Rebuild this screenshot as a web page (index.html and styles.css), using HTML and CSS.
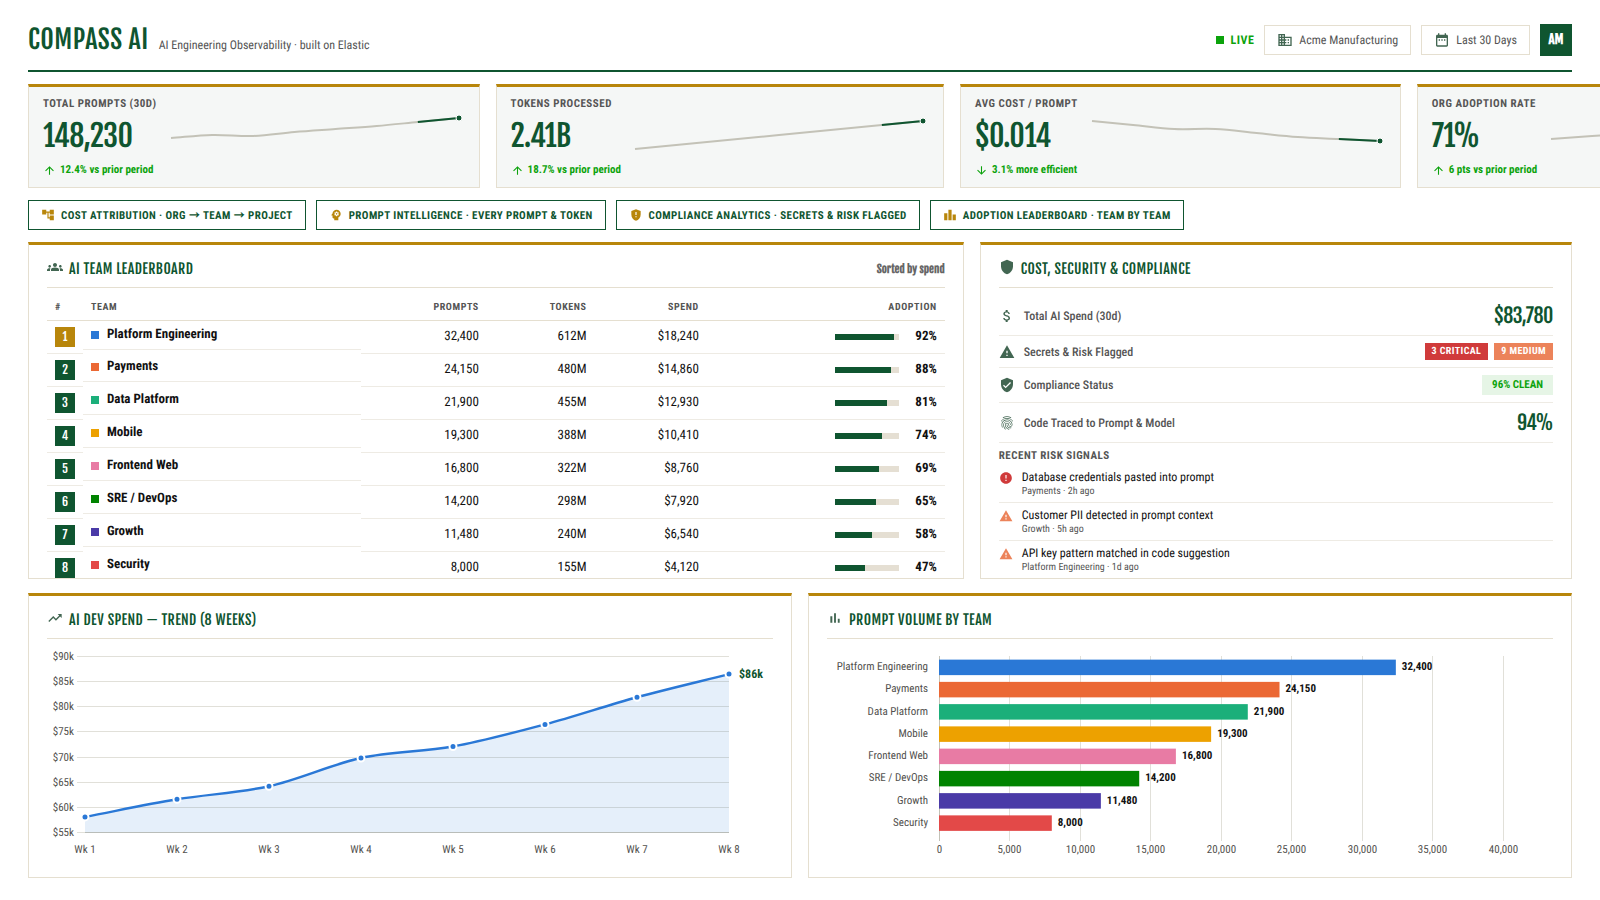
FILE: index.html
```html
<!DOCTYPE html>
<html lang="en">

<head>
    <meta charset="UTF-8">
    <meta name="viewport" content="width=device-width, initial-scale=1.0">
    <title>Compass AI</title>
    <link rel="stylesheet" href="styles.css">
</head>

<body>
    <!-- icon set -->
    <svg class="sprite" aria-hidden="true">
        <symbol id="i-building" viewBox="0 0 24 24"><path d="M12 7V3H2v18h20V7H12zM6 19H4v-2h2v2zm0-4H4v-2h2v2zm0-4H4V9h2v2zm0-4H4V5h2v2zm4 12H8v-2h2v2zm0-4H8v-2h2v2zm0-4H8V9h2v2zm0-4H8V5h2v2zm10 12h-8v-2h2v-2h-2v-2h2v-2h-2V9h8v10zm-2-8h-2v2h2v-2zm0 4h-2v2h2v-2z"/></symbol>
        <symbol id="i-calendar" viewBox="0 0 24 24"><path d="M9 11H7v2h2v-2zm4 0h-2v2h2v-2zm4 0h-2v2h2v-2zm2-7h-1V2h-2v2H8V2H6v2H5c-1.11 0-1.99.9-1.99 2L3 20c0 1.1.89 2 2 2h14c1.1 0 2-.9 2-2V6c0-1.1-.9-2-2-2zm0 16H5V9h14v11z"/></symbol>
        <symbol id="i-tree" viewBox="0 0 24 24"><path d="M22 11V3h-7v3H9V3H2v8h7V8h2v10h4v3h7v-8h-7v3h-2V8h2v3z"/></symbol>
        <symbol id="i-psychology" viewBox="0 0 24 24"><path d="M13 8.57c-.79 0-1.43.64-1.43 1.43s.64 1.43 1.43 1.43 1.43-.64 1.43-1.43-.64-1.43-1.43-1.43z"/><path d="M13 3C9.25 3 6.2 5.94 6.02 9.64L4.1 12.2c-.25.33-.01.8.4.8H6v3c0 1.1.9 2 2 2h1v3h7v-4.68c2.36-1.12 4-3.53 4-6.32 0-3.87-3.13-7-7-7zm3 7c0 .13-.01.26-.02.39l.83.66c.08.06.1.16.05.25l-.8 1.39c-.05.09-.16.12-.24.09l-.99-.4c-.21.16-.43.29-.67.39L14 13.83c-.01.1-.1.17-.2.17h-1.6c-.1 0-.18-.07-.2-.17l-.15-1.06c-.25-.1-.47-.23-.68-.39l-.99.4c-.09.03-.2 0-.25-.09l-.8-1.39c-.05-.08-.03-.19.05-.25l.84-.66c-.01-.13-.02-.26-.02-.39s.02-.27.04-.39l-.85-.66c-.08-.06-.1-.16-.05-.26l.8-1.38c.05-.09.15-.12.24-.09l1 .4c.2-.15.43-.29.67-.39l.15-1.06C12.02 6.07 12.1 6 12.2 6h1.6c.1 0 .18.07.2.17l.15 1.06c.24.1.46.23.67.39l1-.4c.09-.03.2 0 .24.09l.8 1.38c.05.09.03.2-.05.26l-.85.66c.03.12.04.25.04.39z"/></symbol>
        <symbol id="i-shield-alert" viewBox="0 0 24 24"><path d="M12 2 4 5v6.09c0 5.05 3.41 9.76 8 10.91 4.59-1.15 8-5.86 8-10.91V5l-8-3zm1 14h-2v-2h2v2zm0-4h-2V7h2v5z"/></symbol>
        <symbol id="i-leaderboard" viewBox="0 0 24 24"><path d="M7.5 21H2V9h5.5v12zm7.25-18h-5.5v18h5.5V3zM22 11h-5.5v10H22V11z"/></symbol>
        <symbol id="i-groups" viewBox="0 0 24 24"><path d="M12 12.75c1.63 0 3.07.39 4.24.9 1.08.48 1.76 1.56 1.76 2.73V18H6v-1.61c0-1.18.68-2.26 1.76-2.73 1.17-.52 2.61-.91 4.24-.91zM4 13c1.1 0 2-.9 2-2s-.9-2-2-2-2 .9-2 2 .9 2 2 2zm1.13 1.1c-.37-.06-.74-.1-1.13-.1-.99 0-1.93.21-2.78.58C.48 14.9 0 15.62 0 16.43V18h4.5v-1.61c0-.83.23-1.61.63-2.29zM20 13c1.1 0 2-.9 2-2s-.9-2-2-2-2 .9-2 2 .9 2 2 2zm4 3.43c0-.81-.48-1.53-1.22-1.85-.85-.37-1.79-.58-2.78-.58-.39 0-.76.04-1.13.1.4.68.63 1.46.63 2.29V18H24v-1.57zM12 6c1.66 0 3 1.34 3 3s-1.34 3-3 3-3-1.34-3-3 1.34-3 3-3z"/></symbol>
        <symbol id="i-shield" viewBox="0 0 24 24"><path d="M12 1 3 5v6c0 5.55 3.84 10.74 9 12 5.16-1.26 9-6.45 9-12V5l-9-4z"/></symbol>
        <symbol id="i-money" viewBox="0 0 24 24"><path d="M11.8 10.9c-2.27-.59-3-1.2-3-2.15 0-1.09 1.01-1.85 2.7-1.85 1.78 0 2.44.85 2.5 2.1h2.21c-.07-1.72-1.12-3.3-3.21-3.81V3h-3v2.16c-1.94.42-3.5 1.68-3.5 3.61 0 2.31 1.91 3.46 4.7 4.13 2.5.6 3 1.48 3 2.41 0 .69-.49 1.79-2.7 1.79-2.06 0-2.87-.92-2.98-2.1h-2.2c.12 2.19 1.76 3.42 3.68 3.83V21h3v-2.15c1.95-.37 3.5-1.5 3.5-3.55 0-2.84-2.43-3.81-4.7-4.4z"/></symbol>
        <symbol id="i-warning" viewBox="0 0 24 24"><path d="M1 21h22L12 2 1 21zm12-3h-2v-2h2v2zm0-4h-2v-4h2v4z"/></symbol>
        <symbol id="i-verified" viewBox="0 0 24 24"><path d="M12 1 3 5v6c0 5.55 3.84 10.74 9 12 5.16-1.26 9-6.45 9-12V5l-9-4zm-2 16-4-4 1.41-1.41L10 14.17l6.59-6.59L18 9l-8 8z"/></symbol>
        <symbol id="i-fingerprint" viewBox="0 0 24 24"><path d="M17.81 4.47c-.08 0-.16-.02-.23-.06C15.66 3.42 14 3 12.01 3c-1.98 0-3.86.47-5.57 1.41-.24.13-.54.04-.68-.2-.13-.24-.04-.55.2-.68C7.82 2.52 9.86 2 12.01 2c2.13 0 3.99.47 6.03 1.52.25.13.34.43.21.67-.09.18-.26.28-.44.28zM3.5 9.72c-.1 0-.2-.03-.29-.09-.23-.16-.28-.47-.12-.7.99-1.4 2.25-2.5 3.75-3.27C9.98 4.04 14 4.03 17.15 5.65c1.5.77 2.76 1.86 3.75 3.25.16.22.11.54-.12.7-.23.16-.54.11-.7-.12-.9-1.26-2.04-2.25-3.39-2.94-2.87-1.47-6.54-1.47-9.4.01-1.36.7-2.5 1.7-3.4 2.96-.08.14-.23.21-.39.21zm6.25 12.07c-.13 0-.26-.05-.35-.15-.87-.87-1.34-1.43-2.01-2.64-.69-1.23-1.05-2.73-1.05-4.34 0-2.97 2.54-5.39 5.66-5.39s5.66 2.42 5.66 5.39c0 .28-.22.5-.5.5s-.5-.22-.5-.5c0-2.42-2.09-4.39-4.66-4.39-2.57 0-4.66 1.97-4.66 4.39 0 1.44.32 2.77.93 3.85.64 1.15 1.08 1.64 1.85 2.42.19.2.19.51 0 .71-.11.1-.24.15-.37.15zm7.17-1.85c-1.19 0-2.24-.3-3.1-.89-1.49-1.01-2.38-2.65-2.38-4.39 0-.28.22-.5.5-.5s.5.22.5.5c0 1.41.72 2.74 1.94 3.56.71.48 1.54.71 2.54.71.24 0 .64-.03 1.04-.1.27-.05.53.13.58.41.05.27-.13.53-.41.58-.57.11-1.07.12-1.21.12zM14.91 22c-.04 0-.09-.01-.13-.02-1.59-.44-2.63-1.03-3.72-2.1-1.4-1.39-2.17-3.24-2.17-5.22 0-1.62 1.38-2.94 3.08-2.94 1.7 0 3.08 1.32 3.08 2.94 0 1.07.93 1.94 2.08 1.94s2.08-.87 2.08-1.94c0-3.77-3.25-6.83-7.25-6.83-2.84 0-5.44 1.58-6.61 4.03-.39.81-.59 1.76-.59 2.8 0 .78.07 2.01.67 3.61.1.26-.03.55-.29.64-.26.1-.55-.04-.64-.29-.49-1.31-.73-2.61-.73-3.96 0-1.2.23-2.29.68-3.24 1.33-2.79 4.28-4.6 7.51-4.6 4.55 0 8.25 3.51 8.25 7.83 0 1.62-1.38 2.94-3.08 2.94s-3.08-1.32-3.08-2.94c0-1.07-.93-1.94-2.08-1.94s-2.08.87-2.08 1.94c0 1.71.66 3.31 1.87 4.51.95.94 1.86 1.46 3.27 1.85.27.07.42.35.35.61-.05.23-.26.38-.47.38z"/></symbol>
        <symbol id="i-error" viewBox="0 0 24 24"><path d="M12 2C6.48 2 2 6.48 2 12s4.48 10 10 10 10-4.48 10-10S17.52 2 12 2zm1 15h-2v-2h2v2zm0-4h-2V7h2v6z"/></symbol>
        <symbol id="i-trend" viewBox="0 0 24 24"><path d="m16 6 2.29 2.29-4.88 4.88-4-4L2 16.59 3.41 18l6-6 4 4 6.3-6.29L22 12V6z"/></symbol>
        <symbol id="i-bars" viewBox="0 0 24 24"><path d="M5 9.2h3V19H5zM10.6 5h2.8v14h-2.8zm5.6 8H19v6h-2.8z"/></symbol>
        <symbol id="i-up" viewBox="0 0 24 24"><path d="m4 12 1.41 1.41L11 7.83V20h2V7.83l5.58 5.59L20 12l-8-8-8 8z"/></symbol>
        <symbol id="i-down" viewBox="0 0 24 24"><path d="m20 12-1.41-1.41L13 16.17V4h-2v12.17l-5.58-5.59L4 12l8 8 8-8z"/></symbol>
    </svg>

    <header class="topbar">
        <div class="brand">
            <h1>COMPASS AI</h1>
            <span class="tagline">AI Engineering Observability · built on Elastic</span>
        </div>
        <div class="controls">
            <span class="live">LIVE</span>
            <button type="button" class="picker"><svg class="icon"><use href="#i-building"/></svg>Acme Manufacturing</button>
            <button type="button" class="picker"><svg class="icon"><use href="#i-calendar"/></svg>Last 30 Days</button>
            <div class="avatar">AM</div>
        </div>
    </header>

    <section class="kpis">
        <div class="kpi">
            <div>
                <div class="kpi-label">Total Prompts (30d)</div>
                <div class="kpi-value">148,230</div>
                <div class="kpi-delta"><svg class="icon"><use href="#i-up"/></svg>12.4% vs prior period</div>
            </div>
            <svg class="spark" data-points="23,20,21,17,14,11,7,3"></svg>
        </div>
        <div class="kpi">
            <div>
                <div class="kpi-label">Tokens Processed</div>
                <div class="kpi-value">2.41B</div>
                <div class="kpi-delta"><svg class="icon"><use href="#i-up"/></svg>18.7% vs prior period</div>
            </div>
            <svg class="spark" data-points="34,30,26,22,18,14,10,6"></svg>
        </div>
        <div class="kpi">
            <div>
                <div class="kpi-label">Avg Cost / Prompt</div>
                <div class="kpi-value">$0.014</div>
                <div class="kpi-delta"><svg class="icon"><use href="#i-down"/></svg>3.1% more efficient</div>
            </div>
            <svg class="spark" data-points="6,10,14,14,18,22,24,26"></svg>
        </div>
        <div class="kpi">
            <div>
                <div class="kpi-label">Org Adoption Rate</div>
                <div class="kpi-value">71%</div>
                <div class="kpi-delta"><svg class="icon"><use href="#i-up"/></svg>6 pts vs prior period</div>
            </div>
            <svg class="spark" data-points="24,21,18,15,12,10,8,6"></svg>
        </div>
    </section>

    <nav class="chips">
        <button type="button" class="chip"><svg class="icon"><use href="#i-tree"/></svg>Cost Attribution · Org → Team → Project</button>
        <button type="button" class="chip"><svg class="icon"><use href="#i-psychology"/></svg>Prompt Intelligence · Every Prompt &amp; Token</button>
        <button type="button" class="chip"><svg class="icon"><use href="#i-shield-alert"/></svg>Compliance Analytics · Secrets &amp; Risk Flagged</button>
        <button type="button" class="chip"><svg class="icon"><use href="#i-leaderboard"/></svg>Adoption Leaderboard · Team by Team</button>
    </nav>

    <main class="board">
        <div class="row row-top">
            <section class="panel">
                <div class="panel-head">
                    <h2><svg class="icon"><use href="#i-groups"/></svg>AI Team Leaderboard</h2>
                    <span class="note">Sorted by spend</span>
                </div>
                <table class="teams">
                    <thead>
                        <tr>
                            <th class="col-rank">#</th>
                            <th class="col-team">Team</th>
                            <th class="col-prompts num">Prompts</th>
                            <th class="col-tokens num">Tokens</th>
                            <th class="col-spend num">Spend</th>
                            <th class="col-adoption num">Adoption</th>
                        </tr>
                    </thead>
                    <tbody id="teamRows"></tbody>
                </table>
            </section>

            <section class="panel">
                <div class="panel-head">
                    <h2><svg class="icon"><use href="#i-shield"/></svg>Cost, Security &amp; Compliance</h2>
                </div>
                <div class="stat">
                    <span class="stat-label"><svg class="icon"><use href="#i-money"/></svg>Total AI Spend (30d)</span>
                    <span class="stat-value">$83,780</span>
                </div>
                <div class="stat">
                    <span class="stat-label"><svg class="icon"><use href="#i-warning"/></svg>Secrets &amp; Risk Flagged</span>
                    <span class="badges">
                        <span class="badge critical">3 CRITICAL</span>
                        <span class="badge medium">9 MEDIUM</span>
                    </span>
                </div>
                <div class="stat">
                    <span class="stat-label"><svg class="icon"><use href="#i-verified"/></svg>Compliance Status</span>
                    <span class="clean">96% CLEAN</span>
                </div>
                <div class="stat">
                    <span class="stat-label"><svg class="icon"><use href="#i-fingerprint"/></svg>Code Traced to Prompt &amp; Model</span>
                    <span class="stat-value">94%</span>
                </div>
                <h3>Recent Risk Signals</h3>
                <ul class="signals">
                    <li>
                        <svg class="icon red"><use href="#i-error"/></svg>
                        <div>
                            <div class="signal-title">Database credentials pasted into prompt</div>
                            <div class="signal-meta">Payments · 2h ago</div>
                        </div>
                    </li>
                    <li>
                        <svg class="icon"><use href="#i-warning"/></svg>
                        <div>
                            <div class="signal-title">Customer PII detected in prompt context</div>
                            <div class="signal-meta">Growth · 5h ago</div>
                        </div>
                    </li>
                    <li>
                        <svg class="icon"><use href="#i-warning"/></svg>
                        <div>
                            <div class="signal-title">API key pattern matched in code suggestion</div>
                            <div class="signal-meta">Platform Engineering · 1d ago</div>
                        </div>
                    </li>
                </ul>
            </section>
        </div>

        <div class="row row-bottom">
            <section class="panel">
                <div class="panel-head">
                    <h2><svg class="icon"><use href="#i-trend"/></svg>AI Dev Spend — Trend (8 Weeks)</h2>
                </div>
                <svg class="chart" id="spendChart"></svg>
            </section>
            <section class="panel">
                <div class="panel-head">
                    <h2><svg class="icon"><use href="#i-bars"/></svg>Prompt Volume by Team</h2>
                </div>
                <svg class="chart" id="volumeChart"></svg>
            </section>
        </div>
    </main>

    <script src="script.js"></script>
</body>

</html>
```

FILE: styles.css
```css
* {
    box-sizing: border-box;
}

body {
    font-family: "Roboto Condensed", "Noto Sans CJK JP", sans-serif;
    font-size: 13px;
    line-height: 16px;
    text-rendering: geometricPrecision;
    color: #111;
    background: #fff;
    margin: 0;
    padding: 24px 28px 22px;
    height: 100vh;
    overflow: hidden;
    display: flex;
    flex-direction: column;
    gap: 12px;
}

h1,
h2,
h3,
ul {
    margin: 0;
    padding: 0;
}

button {
    font-family: inherit;
    text-rendering: inherit;
    cursor: pointer;
}

.sprite {
    display: none;
}

.icon {
    width: 16px;
    height: 16px;
    flex: none;
    fill: currentColor;
}

/* header */
.topbar {
    display: flex;
    justify-content: space-between;
    align-items: center;
    padding-bottom: 14px;
    border-bottom: 2px solid #0f5530;
}

.brand {
    display: flex;
    align-items: baseline;
    gap: 10px;
}

.brand h1 {
    font-family: "Fjalla One", sans-serif;
    font-size: 26px;
    font-weight: 400;
    line-height: 32px;
    letter-spacing: 0.5px;
    color: #0f5530;
}

.tagline {
    font-size: 12px;
    color: #555;
}

.controls {
    display: flex;
    align-items: center;
    gap: 10px;
}

.live {
    display: flex;
    align-items: center;
    gap: 6px;
    font-size: 12px;
    font-weight: 700;
    letter-spacing: 0.5px;
    color: #0ca30c;
}

.live::before {
    content: "";
    width: 8px;
    height: 8px;
    background: #0ca30c;
}

.picker {
    display: flex;
    align-items: center;
    gap: 6px;
    height: 30px;
    padding: 0 12px;
    border: 1px solid #e5dfd0;
    background: #fff;
    font-size: 12px;
    color: #555;
}

.picker .icon {
    color: #426652;
}

.avatar {
    width: 32px;
    height: 32px;
    background: #0f5530;
    color: #fff;
    font-family: "Fjalla One", sans-serif;
    font-size: 13px;
    font-weight: 700;
    line-height: 32px;
    text-align: center;
}

/* kpi cards: each is as wide as its text plus the sparkline */
.kpis {
    display: grid;
    grid-template-columns: repeat(4, 1fr);
    gap: 16px;
}

.kpi {
    display: flex;
    align-items: center;
    gap: 8px;
    padding: 9px 14px;
    border: 1px solid #e5dfd0;
    border-top: 3px solid #b8860b;
    background: #f5f7f6;
    white-space: nowrap;
}

.kpi-label {
    font-size: 11px;
    font-weight: 700;
    letter-spacing: 0.5px;
    text-transform: uppercase;
    color: #555;
}

.kpi-value {
    margin: 6px 0;
    font-family: "Fjalla One", sans-serif;
    font-size: 30px;
    line-height: 38px;
    letter-spacing: -0.5px;
    color: #0f5530;
}

.kpi-delta {
    display: flex;
    align-items: center;
    gap: 4px;
    font-size: 11px;
    font-weight: 700;
    color: #0ca30c;
}

.kpi-delta .icon {
    width: 13px;
    height: 13px;
}

.spark {
    width: 300px;
    height: 44px;
    flex: none;
}

/* chips */
.chips {
    display: flex;
    gap: 10px;
}

.chip {
    display: flex;
    align-items: center;
    gap: 6px;
    height: 30px;
    padding: 0 12px;
    border: 1px solid #0f5530;
    background: #fff;
    font-size: 11px;
    font-weight: 700;
    letter-spacing: 0.4px;
    text-transform: uppercase;
    color: #0f5530;
}

.chip .icon {
    width: 14px;
    height: 14px;
    color: #b8860b;
}

/* board */
.board {
    flex: 1;
    min-height: 0;
    display: grid;
    grid-template-rows: 13fr 11fr;
    gap: 14px;
}

.row {
    display: grid;
    gap: 16px;
    min-height: 0;
}

.row-top {
    grid-template-columns: 1.58fr 1fr;
}

.row-bottom {
    grid-template-columns: 1fr 1fr;
}

.panel {
    display: flex;
    flex-direction: column;
    min-width: 0;
    min-height: 0;
    padding: 14px 18px 0;
    border: 1px solid #e5dfd0;
    border-top: 3px solid #b8860b;
    background: #fff;
    overflow: hidden;
}

.panel-head {
    display: flex;
    justify-content: space-between;
    align-items: flex-start;
    flex: none;
    height: 29px;
    margin-bottom: 8px;
    border-bottom: 1px solid #e5dfd0;
}

.panel-head h2 {
    display: flex;
    align-items: flex-start;
    gap: 6px;
    font-family: "Fjalla One", sans-serif;
    font-size: 14px;
    font-weight: 400;
    line-height: 22px;
    letter-spacing: 0.4px;
    text-transform: uppercase;
    color: #0f5530;
}

.panel-head .icon {
    color: #426652;
}

.note {
    font-family: "Fjalla One", sans-serif;
    font-size: 11px;
    font-weight: 700;
    line-height: 20px;
    color: #666;
}

/* leaderboard */
.teams {
    width: 100%;
    table-layout: fixed;
    border-collapse: collapse;
}

.teams th {
    height: 24px;
    padding: 0 8px;
    border-bottom: 1px solid #e5dfd0;
    font-size: 10px;
    letter-spacing: 0.6px;
    text-align: left;
    text-transform: uppercase;
    color: #555;
}

.teams td {
    padding: 6px 8px;
    border-bottom: 1px solid #eeebe4;
}

.teams .num {
    text-align: right;
}

.col-rank {
    width: 4%;
}

.col-team {
    width: 31%;
}

.col-prompts {
    width: 14%;
}

.col-tokens {
    width: 12%;
}

.col-spend {
    width: 12.5%;
}

.rank {
    display: block;
    width: 20px;
    height: 20px;
    background: #0f5530;
    color: #fff;
    font-family: "Fjalla One", sans-serif;
    font-size: 12px;
    line-height: 20px;
    text-align: center;
}

.rank.first {
    background: #b8860b;
}

.teams .team {
    display: flex;
    align-items: center;
    gap: 8px;
    font-weight: 700;
}

.swatch {
    width: 8px;
    height: 8px;
}

.adoption {
    display: flex;
    align-items: center;
    justify-content: flex-end;
    font-weight: 700;
}

.adoption-pct {
    width: 38px;
}

.track {
    width: 64px;
    height: 6px;
    background: #e5dfd3;
}

.fill {
    height: 6px;
    background: #0f5530;
}

/* cost, security & compliance */
.stat {
    display: flex;
    justify-content: space-between;
    align-items: center;
    flex: none;
    padding: 7px 0;
    border-bottom: 1px solid #eeebe4;
}

.stat-label {
    display: flex;
    align-items: center;
    gap: 9px;
    font-size: 12px;
    font-weight: 500;
    color: #555;
}

.stat-label .icon {
    color: #426652;
}

.stat-value {
    font-family: "Fjalla One", sans-serif;
    font-size: 20px;
    line-height: 25px;
    letter-spacing: -0.5px;
    color: #0f5530;
}

.badges {
    display: flex;
    gap: 6px;
}

.badge {
    padding: 0 7px;
    font-size: 10px;
    font-weight: 700;
    line-height: 17px;
    letter-spacing: 0.4px;
    color: #fff;
}

.critical {
    background: #d03b3b;
}

.medium {
    background: #ec835a;
}

.clean {
    padding: 0 10px;
    background: #e6f5e6;
    font-size: 11px;
    font-weight: 700;
    line-height: 20px;
    color: #0ca30c;
}

.panel h3 {
    margin-top: 5px;
    font-size: 11px;
    letter-spacing: 0.5px;
    text-transform: uppercase;
    color: #555;
}

.signals {
    margin-top: 1px;
    list-style: none;
}

.signals li {
    display: flex;
    gap: 9px;
    padding: 4px 0 3px;
    border-bottom: 1px solid #eeebe4;
}

.signals li:last-child {
    border-bottom: none;
}

.signals .icon {
    margin-top: 2px;
    width: 14px;
    height: 14px;
    color: #ec835a;
}

.signals .icon.red {
    color: #d03b3b;
}

.signal-title {
    font-size: 12px;
}

.signal-meta {
    font-size: 10px;
    line-height: 14px;
    color: #555;
}

/* charts */
.chart {
    flex: 1;
    width: 100%;
    min-height: 0;
}

.chart text {
    font-size: 11px;
    fill: #52514e;
}

.chart .value {
    font-weight: 700;
    fill: #111;
}

.chart .end-value {
    font-size: 12px;
    font-weight: 700;
    fill: #0f5530;
}

.grid {
    stroke: #e1e0d9;
}

.axis {
    stroke: #c3c2b7;
}

.area {
    fill: #2a78d6;
    fill-opacity: 0.12;
}

.line {
    fill: none;
    stroke: #2a78d6;
    stroke-width: 2.5;
}

.dot {
    fill: #2a78d6;
    stroke: #fff;
    stroke-width: 2;
}

.spark-line {
    fill: none;
    stroke: #c3c2b7;
    stroke-width: 2;
}

.spark-end {
    fill: none;
    stroke: #0f5530;
    stroke-width: 2;
}

.spark-dot {
    fill: #0f5530;
    stroke: #fff;
    stroke-width: 1;
}
```

FILE: script.js
```js
const teams = [
    { name: 'Platform Engineering', prompts: 32400, tokens: '612M', spend: '$18,240', adoption: 92, color: '#2a78d6' },
    { name: 'Payments', prompts: 24150, tokens: '480M', spend: '$14,860', adoption: 88, color: '#eb6834' },
    { name: 'Data Platform', prompts: 21900, tokens: '455M', spend: '$12,930', adoption: 81, color: '#1baf7a' },
    { name: 'Mobile', prompts: 19300, tokens: '388M', spend: '$10,410', adoption: 74, color: '#eda100' },
    { name: 'Frontend Web', prompts: 16800, tokens: '322M', spend: '$8,760', adoption: 69, color: '#e87ba4' },
    { name: 'SRE / DevOps', prompts: 14200, tokens: '298M', spend: '$7,920', adoption: 65, color: '#008300' },
    { name: 'Growth', prompts: 11480, tokens: '240M', spend: '$6,540', adoption: 58, color: '#4a3aa7' },
    { name: 'Security', prompts: 8000, tokens: '155M', spend: '$4,120', adoption: 47, color: '#e34948' }
];

const weeklySpend = [58, 61.5, 64.1, 69.7, 72, 76.4, 81.8, 86.4];

const fmt = n => n.toLocaleString('en-US');

document.getElementById('teamRows').innerHTML = teams.map((t, i) => `
    <tr>
        <td><span class="rank ${i === 0 ? 'first' : ''}">${i + 1}</span></td>
        <td class="team"><span class="swatch" style="background:${t.color}"></span>${t.name}</td>
        <td class="num">${fmt(t.prompts)}</td>
        <td class="num">${t.tokens}</td>
        <td class="num">${t.spend}</td>
        <td class="num">
            <div class="adoption">
                <div class="track"><div class="fill" style="width:${t.adoption}%"></div></div>
                <span class="adoption-pct">${t.adoption}%</span>
            </div>
        </td>
    </tr>`).join('');

// smooth path through the points
function curve(pts) {
    const last = pts.length - 1;
    const tangent = pts.map((p, i) => {
        const a = pts[Math.max(i - 1, 0)], b = pts[Math.min(i + 1, last)];
        return (b[1] - a[1]) / (b[0] - a[0]);
    });
    let d = `M${pts[0][0]} ${pts[0][1]}`;
    for (let i = 1; i < pts.length; i++) {
        const [x0, y0] = pts[i - 1], [x1, y1] = pts[i];
        const h = (x1 - x0) / 3;
        d += `C${x0 + h} ${y0 + h * tangent[i - 1]} ${x1 - h} ${y1 - h * tangent[i]} ${x1} ${y1}`;
    }
    return d;
}

function drawSpark(svg) {
    const step = (svg.clientWidth - 12) / 7;
    const pts = svg.dataset.points.split(',').map((y, i) => [6 + i * step, Number(y)]);
    const [x, y] = pts[7];
    svg.innerHTML = `
        <path class="spark-line" d="${curve(pts)}"/>
        <path class="spark-end" d="M${pts[6][0]} ${pts[6][1]}L${x} ${y}"/>
        <circle class="spark-dot" cx="${x}" cy="${y}" r="3"/>`;
}

function drawSpend() {
    const svg = document.getElementById('spendChart');
    const left = 38, right = svg.clientWidth - 44, top = 9, bottom = svg.clientHeight - 45;
    const px = i => left + i * (right - left) / 7;
    const py = v => bottom - (v - 55) / 35 * (bottom - top);
    const pts = weeklySpend.map((v, i) => [px(i), py(v)]);
    let out = '';
    for (let v = 55; v <= 90; v += 5) {
        const y = Math.round(py(v)) + 0.5;
        out += `<line class="grid" x1="${left - 8}" x2="${right}" y1="${y}" y2="${y}"/>`;
        out += `<text x="${left - 11}" y="${y + 3}" text-anchor="end">$${v}k</text>`;
    }
    const base = Math.round(bottom) + 0.5;
    out += `<line class="axis" x1="${left}" x2="${right}" y1="${base}" y2="${base}"/>`;
    out += `<path class="area" d="${curve(pts)}V${base}H${left}Z"/>`;
    out += `<path class="line" d="${curve(pts)}"/>`;
    pts.forEach(([x, y], i) => {
        out += `<circle class="dot" cx="${x}" cy="${y}" r="3.5"/>`;
        out += `<text x="${x}" y="${base + 20}" text-anchor="middle">Wk ${i + 1}</text>`;
    });
    const [x, y] = pts[7];
    out += `<text class="end-value" x="${x + 10}" y="${y + 4}">$86k</text>`;
    svg.innerHTML = out;
}

function drawVolume() {
    const svg = document.getElementById('volumeChart');
    const left = 112, right = svg.clientWidth - 50, top = 9, bottom = svg.clientHeight - 43;
    const px = v => left + v / 40000 * (right - left);
    const band = (bottom - top) / teams.length;
    let out = '';
    for (let v = 0; v <= 40000; v += 5000) {
        const x = Math.floor(px(v)) + 0.5;
        out += `<line class="${v ? 'grid' : 'axis'}" x1="${x}" x2="${x}" y1="${top}" y2="${bottom + 7}"/>`;
        out += `<text x="${x}" y="${bottom + 19}" text-anchor="middle">${fmt(v)}</text>`;
    }
    teams.forEach((t, i) => {
        const y = top + band * i + band / 2;
        out += `<rect x="${left}" y="${y - 7.5}" width="${px(t.prompts) - left}" height="15.5" fill="${t.color}"/>`;
        out += `<text x="${left - 11}" y="${y + 3}" text-anchor="end">${t.name}</text>`;
        out += `<text class="value" x="${px(t.prompts) + 6}" y="${y + 3}">${fmt(t.prompts)}</text>`;
    });
    svg.innerHTML = out;
}

function drawAll() {
    document.querySelectorAll('.spark').forEach(drawSpark);
    drawSpend();
    drawVolume();
}

drawAll();
window.addEventListener('resize', drawAll);
```
